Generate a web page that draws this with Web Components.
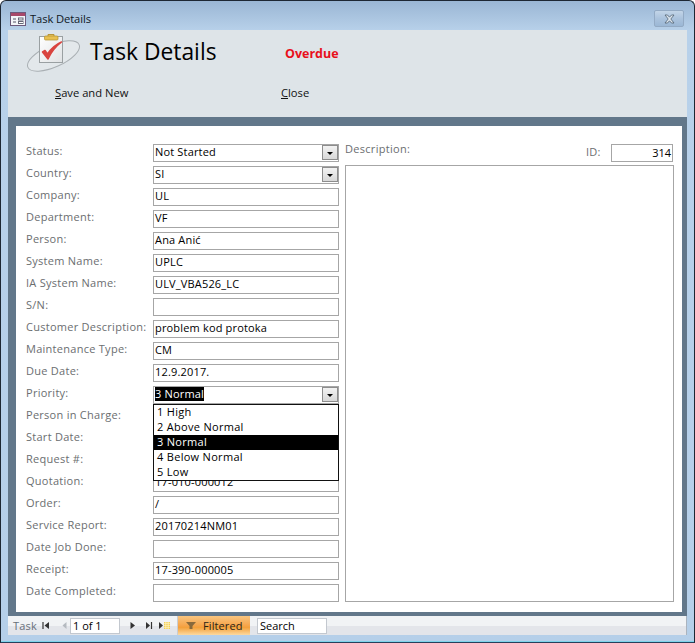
<!DOCTYPE html>
<html><head><meta charset="utf-8"><style>
html,body{margin:0;padding:0;background:#fff}
body{font-family:"Open Sans","Noto Sans",sans-serif;font-size:11px;color:#000}
</style></head><body>
<task-window>
  <title-bar slot="title">Task Details</title-bar>
  <form-header slot="header"></form-header>
  <form-panel slot="panel">
    <field-row slot="fields" label="Status:" value="Not Started" combo></field-row>
    <field-row slot="fields" label="Country:" value="SI" combo></field-row>
    <field-row slot="fields" label="Company:" value="UL"></field-row>
    <field-row slot="fields" label="Department:" value="VF"></field-row>
    <field-row slot="fields" label="Person:" value="Ana Anić"></field-row>
    <field-row slot="fields" label="System Name:" value="UPLC"></field-row>
    <field-row slot="fields" label="IA System Name:" value="ULV_VBA526_LC"></field-row>
    <field-row slot="fields" label="S/N:" value=""></field-row>
    <field-row slot="fields" label="Customer Description:" value="problem kod protoka"></field-row>
    <field-row slot="fields" label="Maintenance Type:" value="CM"></field-row>
    <field-row slot="fields" label="Due Date:" value="12.9.2017."></field-row>
    <field-row slot="fields" label="Priority:" value="3 Normal" combo selected open></field-row>
    <field-row slot="fields" label="Person in Charge:" value=""></field-row>
    <field-row slot="fields" label="Start Date:" value=""></field-row>
    <field-row slot="fields" label="Request #:" value=""></field-row>
    <field-row slot="fields" label="Quotation:" value="17-010-000012"></field-row>
    <field-row slot="fields" label="Order:" value="/"></field-row>
    <field-row slot="fields" label="Service Report:" value="20170214NM01"></field-row>
    <field-row slot="fields" label="Date Job Done:" value=""></field-row>
    <field-row slot="fields" label="Receipt:" value="17-390-000005"></field-row>
    <field-row slot="fields" label="Date Completed:" value=""></field-row>
  </form-panel>
  <nav-bar slot="nav"></nav-bar>
</task-window>
<script>
function def(name, css, html){
  customElements.define(name, class extends HTMLElement{
    connectedCallback(){
      if(this.shadowRoot) return;
      const r=this.attachShadow({mode:'open'});
      r.innerHTML='<style>'+css+'</style>'+(typeof html==='function'?html(this):html);
    }
  });
}
def('task-window',`
:host{display:block;width:695px;height:643px;box-sizing:border-box;position:relative;overflow:hidden;
 border:1px solid #1d2733;border-bottom:1px solid #27405c;border-radius:6px 6px 0 0;
 background:linear-gradient(#9ab6d4 0,#b8d1ea 30px,#b5cfe9 100%)}
.in{display:flex;flex-direction:column;height:100%;padding:0 7px 0 7px;box-sizing:border-box}
.bot{height:7px;flex:none;margin:0 -7px;box-sizing:border-box;border-bottom:1px solid #7fd3ea}
`,`<div class="in"><slot name="title"></slot><slot name="header"></slot><slot name="panel"></slot><slot name="nav"></slot><div class="bot"></div></div>`);

def('title-bar',`
:host{display:flex;align-items:center;height:29px;flex:none;margin-left:-7px;margin-right:-7px;padding:0 9px;gap:4px;font:11.2px "Open Sans",sans-serif;color:#10181f;position:relative;box-sizing:border-box}
.t{padding-top:6px;letter-spacing:-.1px}
svg{margin-top:6px;display:block}
.x{position:absolute;right:10px;top:9px;width:30px;height:17px;box-sizing:border-box;border:1px solid #93aac4;border-radius:2px;
 background:linear-gradient(#c3d5e8,#abc3dd 50%,#9bb7d5);display:flex;align-items:center;justify-content:center}
.x svg{margin:0}
`,`<svg width="16" height="14" viewBox="0 0 16 14"><rect x=".5" y=".5" width="15" height="13" fill="#f4f6fa" stroke="#6c5a7c"/><rect x="1" y="1" width="14" height="3" fill="#a8486a"/><path d="M3 7h3M3 10h3" stroke="#556" stroke-width="1"/><rect x="8.5" y="6" width="4.5" height="2" fill="#fff" stroke="#667"/><rect x="8.5" y="9.5" width="4.5" height="2" fill="#fff" stroke="#667"/></svg><span class="t"><slot></slot></span><div class="x"><svg width="13" height="10" viewBox="0 0 13 10"><path d="M2 1h2.5l2 2.2 2-2.2H11L7.8 5 11 9H8.500l-2-2.2-2 2.2H2l3.2-4z" fill="#dfe8f1" stroke="#4f5f70" stroke-width=".8"/></svg></div>`);

def('form-header',`
:host{display:block;height:87px;flex:none;background:#dee4e8;position:relative;box-sizing:border-box;padding:0}
.top{display:flex;height:48px;align-items:flex-start}
.ic{width:64px;flex:none;margin-left:18px;margin-top:3px;}
h1{margin:5px 0 0 0;width:195px;font:400 22.8px/33px "Open Sans",sans-serif;color:#000;flex:none}
.od{margin-top:14px;font:700 12.5px/20px "Open Sans",sans-serif;color:#e8101c}
.btns{display:flex;padding:7px 0 0 47px;font:11.2px/16px "Open Sans",sans-serif;color:#111}
.b1{width:226px}
u{text-decoration:underline}
`,`<div class="top"><div class="ic"><svg width="62" height="44" viewBox="0 0 62 44"><defs><linearGradient id="p" x1="0" y1="0" x2="1" y2="1"><stop offset="0" stop-color="#fff"/><stop offset="1" stop-color="#dfe2e4"/></linearGradient></defs><ellipse cx="27.500" cy="23" rx="28" ry="11" transform="rotate(-24 27.500 23)" fill="#e3e8eb" stroke="#a9afb3"/><rect x="13.500" y="3.500" width="23" height="26" fill="url(#p)" stroke="#9aa0a2"/><path d="M22 3V1.500h6V3" fill="#eec964" stroke="#b28f2c" stroke-width=".9"/><rect x="18.500" y="3" width="13.500" height="4" rx="1" fill="#e8c050" stroke="#b28f2c" stroke-width=".7"/><path d="M16.500 19l5.500 7c3-6.500 7-12 13.500-17-7 3-11 7.500-14 12l-2.500-3.500z" fill="#d9443f" stroke="#d9443f" stroke-width="1.500" stroke-linejoin="round"/></svg></div><h1>Task Details</h1><div class="od">Overdue</div></div>
<div class="btns"><span class="b1"><u>S</u>ave and New</span><span><u>C</u>lose</span></div>`);

def('form-panel',`
:host{display:block;flex:none;background:#62778a;padding:9px 5px 4px 8px;height:499px;box-sizing:border-box}
.w{background:#fff;height:486px;box-sizing:border-box;padding:18px 8px 0 10px;display:flex;gap:6px;font:11px "Open Sans",sans-serif}
.l{width:313px;flex:none;display:flex;flex-direction:column;gap:4px}
.r{width:329px;flex:none;display:flex;flex-direction:column}
.rh{display:flex;height:21px;flex:none;color:#6b6e70;letter-spacing:.3px}
.d{flex:1}
.d span{display:block;line-height:10px}
.idl{width:25px;line-height:15px;letter-spacing:.2px}
.idv{box-sizing:border-box;width:62px;height:18px;border:1px solid #a6a6a6;text-align:right;padding-right:1px;line-height:15.500px;color:#000;margin-right:1px;letter-spacing:0}
.box{box-sizing:border-box;height:437px;border:1px solid #a6a6a6}
`,`<div class="w"><div class="l"><slot name="fields"></slot></div><div class="r"><div class="rh"><div class="d"><span>Description:</span></div><div class="idl">ID:</div><div class="idv">314</div></div><div class="box"></div></div></div>`);

const items=['1 High','2 Above Normal','3 Normal','4 Below Normal','5 Low'];
def('field-row',`
:host{display:flex;height:18px;position:relative}
.lab{width:127px;flex:none;color:#6b6e70;line-height:13px;white-space:nowrap;letter-spacing:.27px}
.val{box-sizing:border-box;width:186px;height:18px;border:1px solid #a6a6a6;background:#fff;padding-left:1px;line-height:14px;color:#000;white-space:nowrap;display:flex;letter-spacing:.17px}
.val span{height:14px}
.val span.s{background:#000;color:#fff}
.arrow{position:absolute;right:1px;top:1px;width:16px;height:15px;box-sizing:border-box;border:1px solid #8d8d8d;background:linear-gradient(#f2f2f2,#d8d8d8);display:flex;align-items:center;justify-content:center;padding-top:2px}
.arrow i{display:block;width:0;height:0;border-left:3.500px solid transparent;border-right:3.500px solid transparent;border-top:3.500px solid #000}
.list{position:absolute;left:127px;top:18px;width:186px;height:77px;box-sizing:border-box;border:1px solid #111;background:#fff;z-index:5;font-size:11px;letter-spacing:.3px}
.list div{height:15px;line-height:14px;padding-left:3px}
.list .h{background:#000;color:#fff}
.vw{position:relative;width:186px;height:18px;flex:none}
`,h=>{
  const combo=h.hasAttribute('combo'),sel=h.hasAttribute('selected'),open=h.hasAttribute('open');
  const v=h.getAttribute('value');
  return `<div class="lab">${h.getAttribute('label')}</div><div class="vw"><div class="val"><span class="${sel?'s':''}">${v}</span></div>${combo?'<div class="arrow"><i></i></div>':''}</div>`+
  (open?'<div class="list">'+items.map(t=>`<div class="${t==='3 Normal'?'h':''}">${t}</div>`).join('')+'</div>':'');
});

def('nav-bar',`
:host{display:flex;align-items:center;flex:none;height:19px;box-sizing:border-box;background:linear-gradient(#f1f3f5 50%,#e3e5ea 50%);border-right:1px solid #aab3be;font:11px "Open Sans",sans-serif;color:#000;position:relative}
.task{width:34px;padding-left:5px;box-sizing:border-box;color:#68707a;letter-spacing:.2px;flex:none}
svg{display:block;flex:none}
.ip{box-sizing:border-box;height:16px;border:1px solid #c3c8cf;background:#fff;line-height:14px;padding-left:2px;flex:none}
.f{width:72px;height:19px;flex:none;box-sizing:border-box;background:linear-gradient(#f9c57f,#f6a54b 50%,#f4a03a 60%,#fcd9a0);display:flex;align-items:center;padding-left:8px;gap:7px;color:#2a2316;letter-spacing:.1px}
.sep{width:1px;height:19px;background:#c9cdd3;flex:none}
`,`<div class="task">Task</div>
<svg width="8" height="9" viewBox="0 0 8 9"><path d="M1 1v7" stroke="#333" stroke-width="1.200"/><path d="M7 1v7L2.500 4.500z" fill="#333"/></svg>
<svg width="7" height="9" viewBox="0 0 7 9" style="margin-left:11px"><path d="M5.500 1v7L1.500 4.500z" fill="#b5bac0"/></svg>
<div class="ip" style="width:50px;margin-left:2px">1 of 1</div>
<svg width="7" height="9" viewBox="0 0 7 9" style="margin-left:9px"><path d="M1.500 1v7l4.500-3.500z" fill="#333"/></svg>
<svg width="8" height="9" viewBox="0 0 8 9" style="margin-left:9px"><path d="M1 1v7l4-3.500z" fill="#333"/><path d="M6.500 1v7" stroke="#333" stroke-width="1.200"/></svg>
<svg width="13" height="9" viewBox="0 0 13 9" style="margin-left:5px"><path d="M1 1v7l4-3.500z" fill="#333"/><rect x="6" y="1" width="6" height="7" fill="#f2cf5b"/><path d="M7.500 1v7M9 1v7M10.500 1v7M6 2.500h6M6 4.500h6M6 6.500h6" stroke="#fff3c0" stroke-width=".6"/></svg>
<div class="sep" style="margin-left:6px"></div>
<div class="f"><svg width="10" height="8" viewBox="0 0 10 8"><path d="M0 0h10L6.500 4v3h-3V4z" fill="#8a6a3c"/></svg><span>Filtered</span></div>
<div class="ip" style="width:70px;margin-left:7px">Search</div>`);
</script>
</body></html>
